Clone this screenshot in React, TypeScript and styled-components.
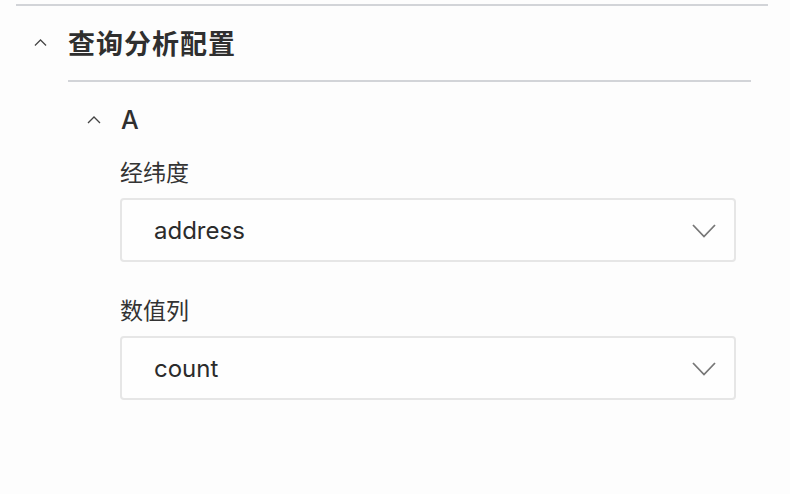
import React from "react";
import styled, { createGlobalStyle } from "styled-components";

const Global = createGlobalStyle`
  html, body { margin: 0; padding: 0; background: #fdfdfd; }
  body { font-family: Inter, "Noto Sans CJK SC", sans-serif; color: #333; }
`;

const Page = styled.div`
  width: 790px;
  height: 494px;
  overflow: hidden;
  padding: 4px 22px 0 16px;
  box-sizing: border-box;
`;

const TopRule = styled.div`
  height: 2px;
  background: #d2d4d8;
`;

const SectionHeader = styled.div`
  display: flex;
  align-items: center;
  height: 74px;
  padding-left: 18px;
  gap: 21px;
`;

const SectionTitle = styled.div`
  font-family: "Noto Sans CJK SC", sans-serif;
  font-size: 27px;
  font-weight: 600;
  color: #2f2f2f;
  letter-spacing: 1px;
  margin-top: -2px;
`;

const Body = styled.div`
  margin-left: 52px;
  margin-right: 17px;
`;

const Rule = styled.div`
  height: 2px;
  background: #d2d4d8;
`;

const SubHeader = styled.div`
  display: flex;
  align-items: center;
  height: 76px;
  padding-left: 19px;
  gap: 20px;
`;

const SubTitle = styled.div`
  font-family: Inter, sans-serif;
  font-size: 25px;
  font-weight: 500;
  color: #2f2f2f;
`;

const Fields = styled.div`
  padding-left: 52px;
  padding-right: 15px;
  margin-top: -2px;
`;

const Label = styled.div`
  font-family: "Noto Sans CJK SC", sans-serif;
  font-size: 23px;
  color: #333;
  height: 30px;
  line-height: 30px;
  margin-bottom: 12px;
`;

const Select = styled.div`
  display: flex;
  align-items: center;
  justify-content: space-between;
  height: 64px;
  box-sizing: border-box;
  border: 2px solid #e6e6e6;
  border-radius: 4px;
  background: #fefefe;
  padding: 2px 18px 0 32px;
  margin-bottom: 32px;
`;

const Value = styled.span`
  font-family: Inter, sans-serif;
  font-size: 24px;
  color: #2b2b2b;
  margin-top: -2px;
`;

const ChevronUp = ({ size }: { size: number }) => (
  <svg width={size} height={size / 2 + 1} viewBox="0 0 14 8" fill="none">
    <path d="M1 7 L7 1 L13 7" stroke="#444" strokeWidth="1.3" />
  </svg>
);

const ChevronDown = () => (
  <svg width="24" height="14" viewBox="0 0 24 14" fill="none">
    <path d="M1 1 L12 12.5 L23 1" stroke="#777" strokeWidth="1.8" />
  </svg>
);

const Field = ({ label, value }: { label: string; value: string }) => (
  <>
    <Label>{label}</Label>
    <Select>
      <Value>{value}</Value>
      <ChevronDown />
    </Select>
  </>
);

export default function App() {
  return (
    <>
      <Global />
      <Page>
        <TopRule />
        <SectionHeader>
          <ChevronUp size={13} />
          <SectionTitle>查询分析配置</SectionTitle>
        </SectionHeader>
        <Body>
          <Rule />
          <SubHeader>
            <ChevronUp size={14} />
            <SubTitle>A</SubTitle>
          </SubHeader>
          <Fields>
            <Field label="经纬度" value="address" />
            <Field label="数值列" value="count" />
          </Fields>
        </Body>
      </Page>
    </>
  );
}
